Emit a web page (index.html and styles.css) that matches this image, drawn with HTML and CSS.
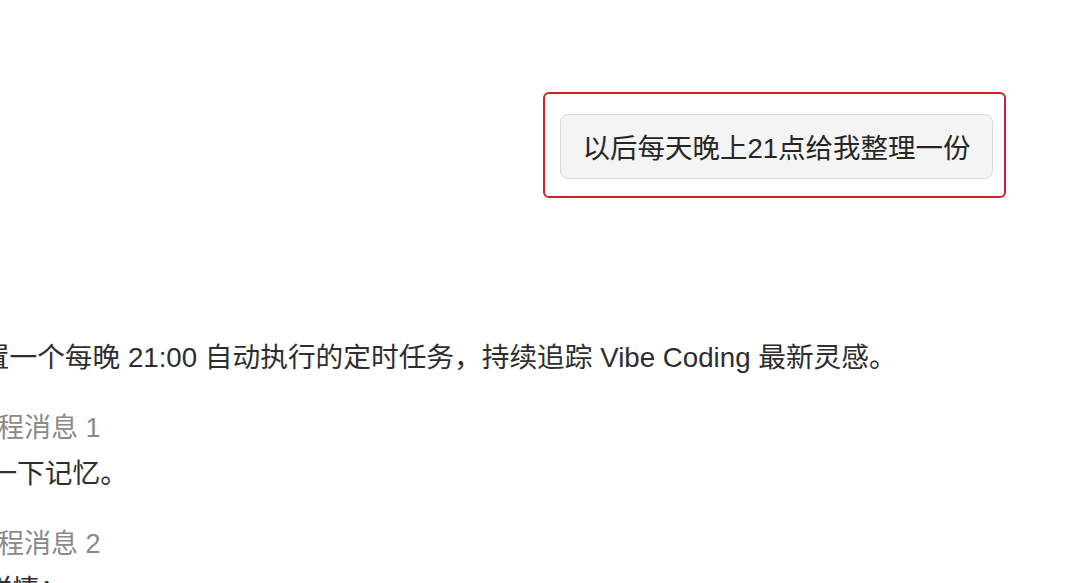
FILE: index.html
```html
<!DOCTYPE html>
<html lang="zh-CN">
<head>
<meta charset="utf-8">
<title>定时任务</title>
<link rel="stylesheet" href="styles.css">
</head>
<body>
<div class="page">
  <div class="request-row">
    <div class="highlight">
      <div class="bubble">以后每天晚上21点给我整理一份</div>
    </div>
  </div>
  <div class="reply">
    <p class="text first">好的，设置一个每晚 21:00 自动执行的定时任务，持续追踪 Vibe Coding 最新灵感。</p>
    <div class="step">
      <div class="label">过程消息 1</div>
      <p class="text t2">先查一下记忆。</p>
    </div>
    <div class="step">
      <div class="label">过程消息 2</div>
      <p class="text t3">任务详情：</p>
    </div>
  </div>
</div>
</body>
</html>
```

FILE: styles.css
```css
html, body {
  margin: 0;
  padding: 0;
  background: #ffffff;
}

body {
  font-family: "Liberation Sans", "Noto Sans CJK SC", sans-serif;
  color: #2b2b2b;
  overflow: hidden;
  width: 1080px;
  height: 583px;
}

.page {
  padding-top: 92px;
}

.request-row {
  display: flex;
  justify-content: flex-end;
  padding-right: 74px;
}

.highlight {
  border: 2px solid #d1202a;
  border-radius: 6px;
  padding: 20px 11px 17px 15px;
  width: 433px;
}

.bubble {
  box-sizing: border-box;
  height: 65px;
  background: #f4f4f4;
  border: 1px solid #d9d9d9;
  border-radius: 8px;
  font-size: 27.5px;
  line-height: 67px;
  color: #262626;
  text-align: center;
  white-space: nowrap;
  overflow: hidden;
}

.reply {
  margin-left: -129px;
  padding-top: 140px;
}

.text {
  margin: 0;
  font-size: 27.7px;
  line-height: 40px;
  color: #2e2e2e;
  white-space: nowrap;
}

.step {
  margin-top: 32px;
}

.label {
  font-size: 27px;
  line-height: 36px;
  color: #8a8a8a;
  padding-left: 99px;
  margin-bottom: 8px;
}

.t2 {
  padding-left: 63px;
}

.t3 {
  padding-left: 58px;
}
```
